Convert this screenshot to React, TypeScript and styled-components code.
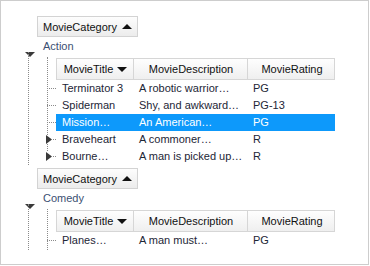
import React from "react";
import styled, { createGlobalStyle, css } from "styled-components";

const GlobalStyle = createGlobalStyle`
  html, body {
    margin: 0;
    padding: 0;
    background: #ffffff;
  }
  body {
    font-family: "Liberation Sans", Arial, sans-serif;
    font-size: 11px;
  }
`;

const Frame = styled.div`
  width: 369px;
  height: 265px;
  box-sizing: border-box;
  border: 1px solid #cdcdcd;
  background: #ffffff;
  padding-top: 15px;
  overflow: hidden;
`;

const Groups = styled.div`
  display: flex;
  flex-direction: column;
  gap: 3px;
`;

const Group = styled.div`
  display: flex;
  flex-direction: column;
`;

const GroupBar = styled.div`
  display: flex;
  padding-left: 36px;
`;

const GroupButton = styled.div`
  width: 101px;
  height: 21px;
  box-sizing: border-box;
  border: 1px solid #d3d3d3;
  background: linear-gradient(#fdfdfd, #ececec);
  display: flex;
  align-items: center;
  padding: 0 5px;
  color: #111111;
  font-size: 11px;
`;

const Arrow = styled.svg`
  margin-left: auto;
  flex: 0 0 auto;
`;

const GroupRow = styled.div`
  display: flex;
  height: 21px;
`;

const ExpanderCell = styled.div`
  width: 18px;
  margin-left: 24px;
  padding-top: 10px;
  box-sizing: border-box;
`;

const GroupTitle = styled.div`
  line-height: 18px;
  color: #3b4f72;
`;

const Children = styled.div<{ $continues?: boolean }>`
  position: relative;
  margin-left: 27px;
  padding-bottom: ${(p) => (p.$continues ? "1px" : "0")};

  &::before {
    content: "";
    position: absolute;
    left: 0;
    top: -6px;
    bottom: 0;
    border-left: 1px dotted #8a8a8a;
  }
`;

const GridBlock = styled.div<{ $continues?: boolean }>`
  position: relative;
  margin-left: 28px;
  width: 279px;

  &::before {
    content: "";
    position: absolute;
    left: -9px;
    top: -1px;
    bottom: ${(p) => (p.$continues ? "-1px" : "8px")};
    border-left: 1px dotted #8a8a8a;
  }
`;

const columns = css`
  display: grid;
  grid-template-columns: 77px 114px 88px;
`;

const HeaderRow = styled.div`
  ${columns};
  height: 22px;
  box-sizing: border-box;
  border: 1px solid #d6d6d6;
  background: linear-gradient(#fefefe, #efefef);
  position: relative;
`;

const HeaderCell = styled.div<{ $first?: boolean }>`
  display: flex;
  align-items: center;
  justify-content: center;
  gap: 4px;
  color: #111111;
  border-left: ${(p) => (p.$first ? "none" : "1px solid #d6d6d6")};
  margin-left: ${(p) => (p.$first ? "0" : "-1px")};
`;

const Row = styled.div<{ $selected?: boolean }>`
  ${columns};
  position: relative;
  height: 17px;
  line-height: 17px;
  color: ${(p) => (p.$selected ? "#ffffff" : "#1d2636")};
  background: ${(p) => (p.$selected ? "#0d99fb" : "transparent")};

  &::before {
    content: "";
    position: absolute;
    left: -9px;
    width: 9px;
    top: 8px;
    border-top: 1px dotted #8a8a8a;
  }
`;

const Cell = styled.div`
  padding-left: 6px;
  white-space: nowrap;
  overflow: hidden;
`;

const RowExpander = styled.svg`
  position: absolute;
  left: -10px;
  top: 4px;
  background: #ffffff;
`;

const DownTriangle = () => (
  <svg width="10" height="5" viewBox="0 0 10 5">
    <polygon points="0,0 10,0 5,5" fill="#3a3a3a" />
  </svg>
);

const SortUp = () => (
  <Arrow width="10" height="5" viewBox="0 0 10 5">
    <polygon points="0,5 10,5 5,0" fill="#111111" />
  </Arrow>
);

const SortDown = () => (
  <svg width="10" height="5" viewBox="0 0 10 5">
    <polygon points="0,0 10,0 5,5" fill="#111111" />
  </svg>
);

type Movie = {
  title: string;
  description: string;
  rating: string;
  selected?: boolean;
  expandable?: boolean;
};

const groups: { name: string; continues?: boolean; movies: Movie[] }[] = [
  {
    name: "Action",
    movies: [
      { title: "Terminator 3", description: "A robotic warrior…", rating: "PG" },
      { title: "Spiderman", description: "Shy, and awkward…", rating: "PG-13" },
      { title: "Mission…", description: "An American…", rating: "PG", selected: true },
      { title: "Braveheart", description: "A commoner…", rating: "R", expandable: true },
      { title: "Bourne…", description: "A man is picked up…", rating: "R", expandable: true },
    ],
  },
  {
    name: "Comedy",
    continues: true,
    movies: [{ title: "Planes…", description: "A man must…", rating: "PG" }],
  },
];

export default function App() {
  return (
    <>
      <GlobalStyle />
      <Frame>
        <Groups>
          {groups.map((g) => (
            <Group key={g.name}>
              <GroupBar>
                <GroupButton>
                  MovieCategory
                  <SortUp />
                </GroupButton>
              </GroupBar>
              <GroupRow>
                <ExpanderCell>
                  <DownTriangle />
                </ExpanderCell>
                <GroupTitle>{g.name}</GroupTitle>
              </GroupRow>
              <Children $continues={g.continues}>
                <GridBlock $continues={g.continues}>
                  <HeaderRow>
                    <HeaderCell $first>
                      MovieTitle
                      <SortDown />
                    </HeaderCell>
                    <HeaderCell>MovieDescription</HeaderCell>
                    <HeaderCell>MovieRating</HeaderCell>
                  </HeaderRow>
                  {g.movies.map((m) => (
                    <Row key={m.title} $selected={m.selected}>
                      {m.expandable && (
                        <RowExpander width="6" height="9" viewBox="0 0 6 9">
                          <polygon points="0,0 6,4.5 0,9" fill="#3a3a3a" />
                        </RowExpander>
                      )}
                      <Cell>{m.title}</Cell>
                      <Cell>{m.description}</Cell>
                      <Cell>{m.rating}</Cell>
                    </Row>
                  ))}
                </GridBlock>
              </Children>
            </Group>
          ))}
        </Groups>
      </Frame>
    </>
  );
}
